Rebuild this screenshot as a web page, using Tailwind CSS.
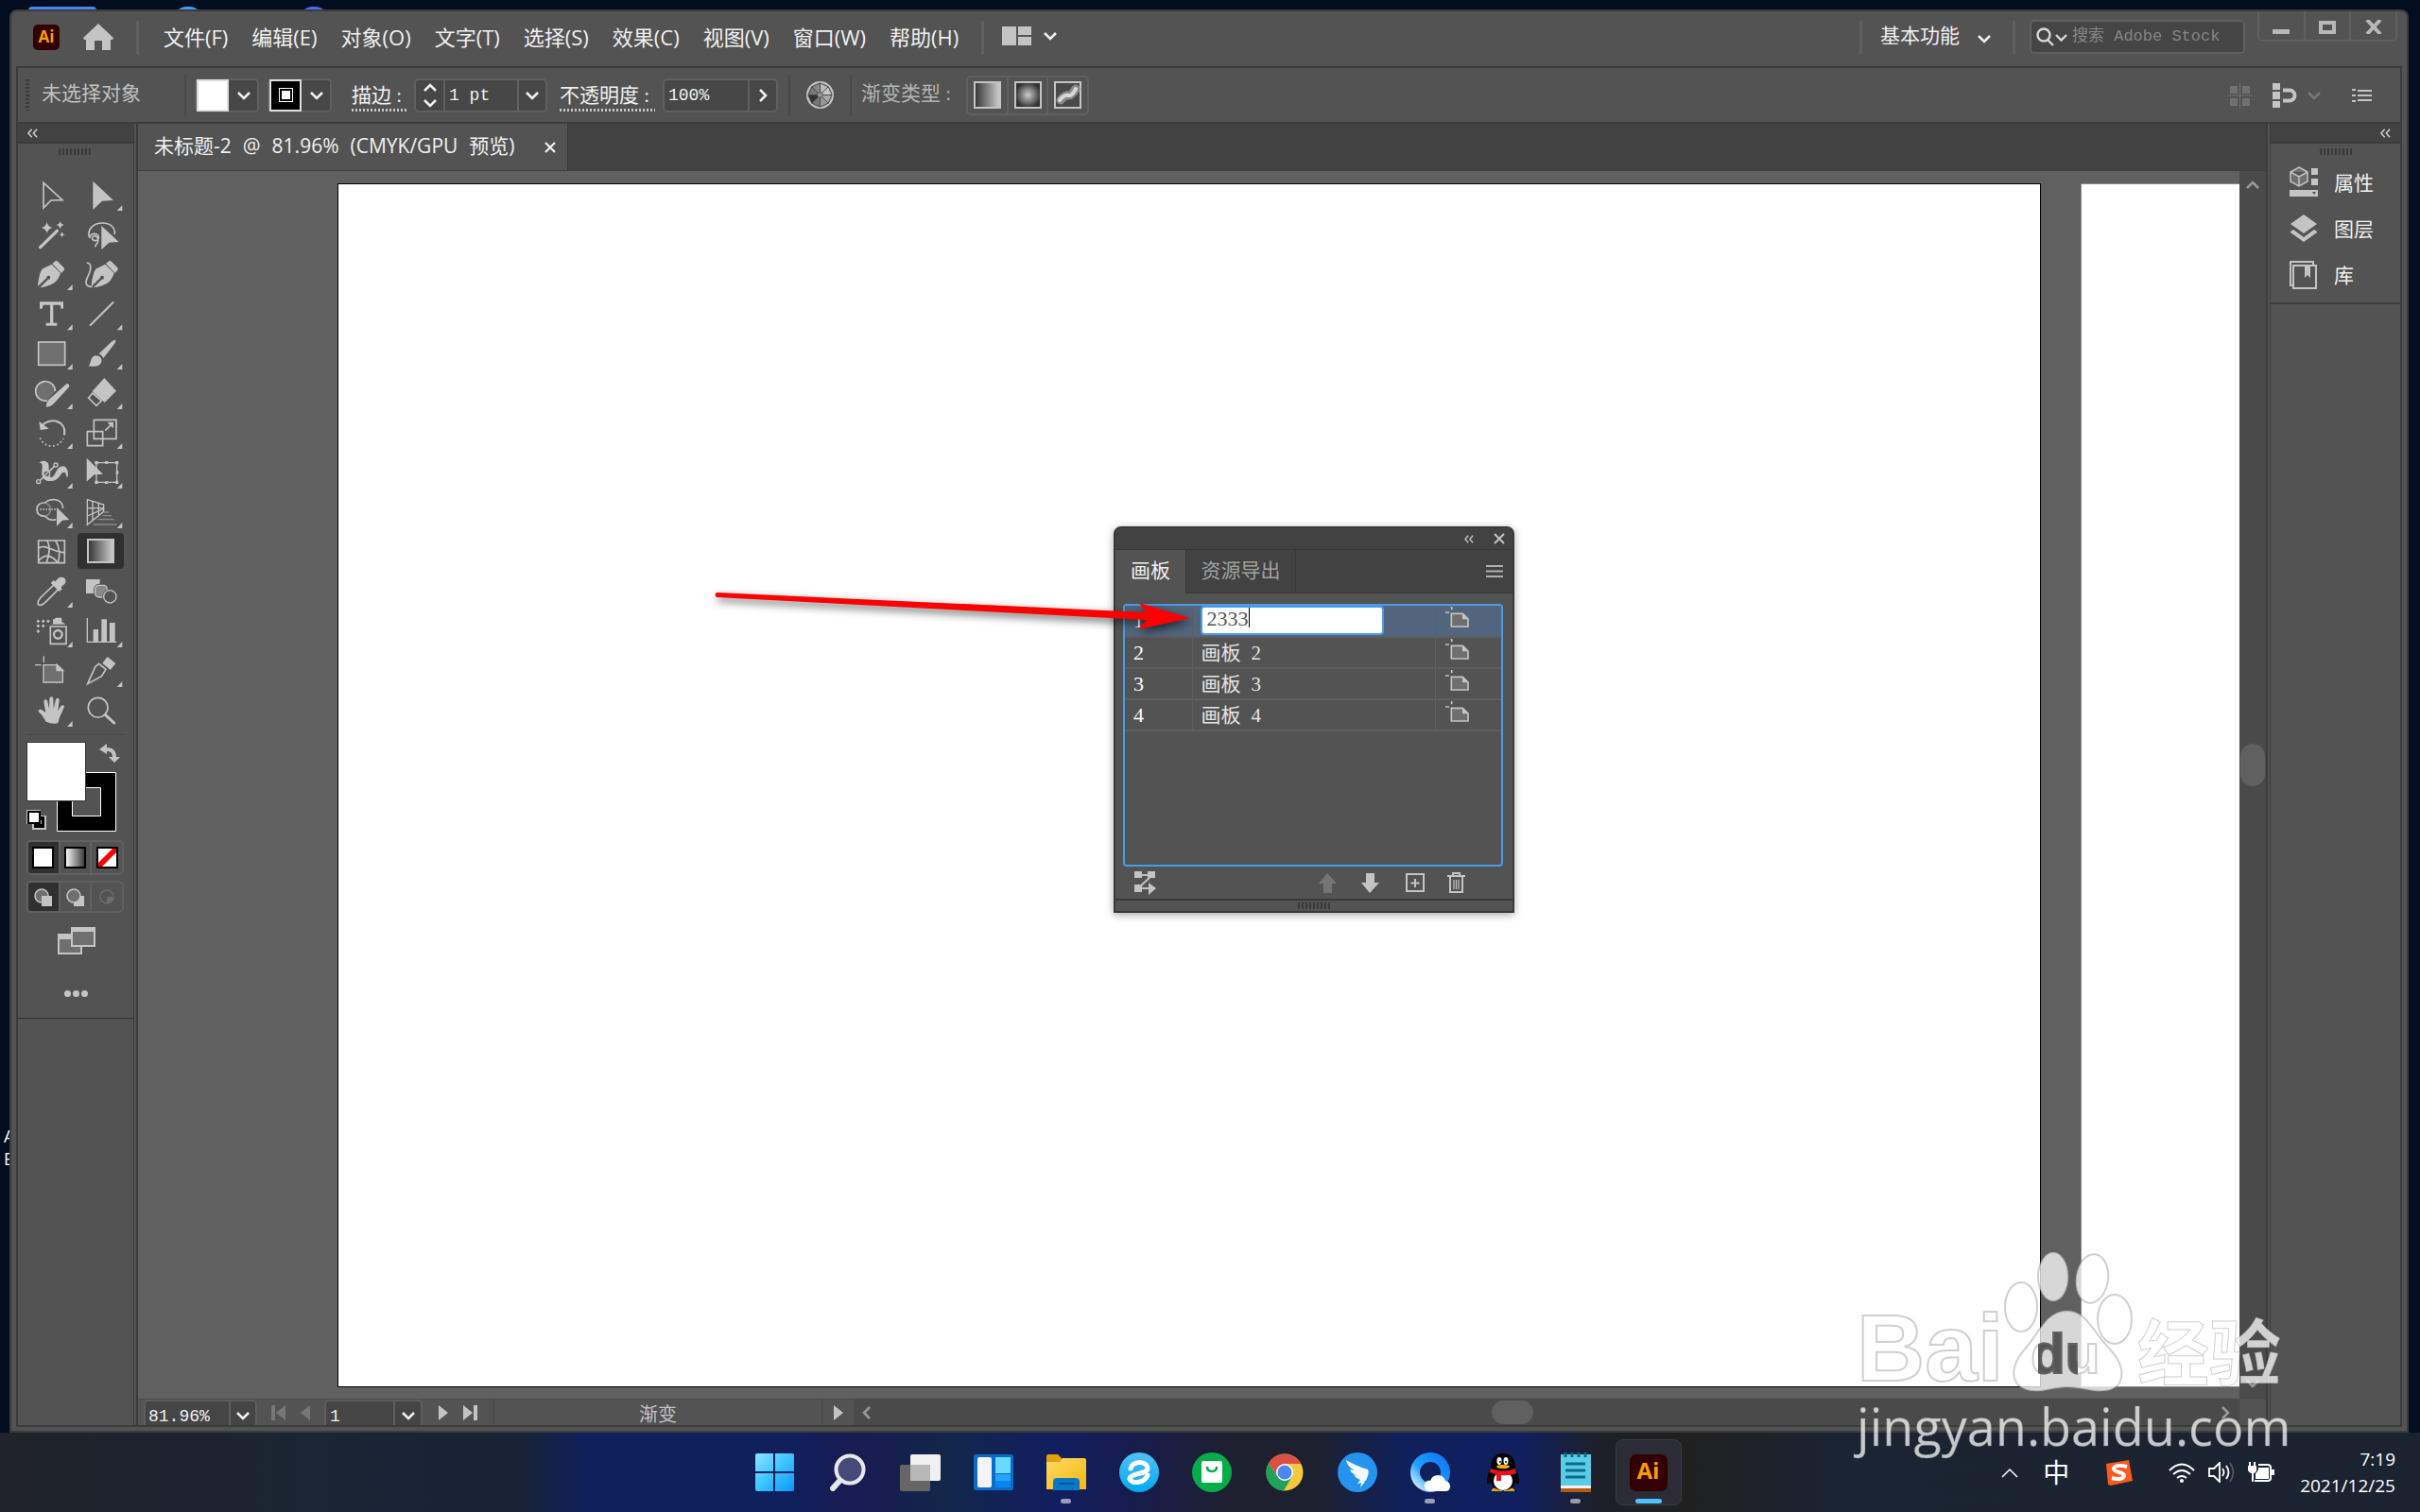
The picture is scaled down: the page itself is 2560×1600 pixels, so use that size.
<!DOCTYPE html>
<html lang="zh-CN">

<head>
    <meta charset="UTF-8">
    <meta name="viewport" content="width=device-width, initial-scale=1.0">
    <title>未标题-2</title>
    <script src="https://cdn.jsdelivr.net/npm/@tailwindcss/browser@4"></script>
</head>

<body class="relative flex h-screen flex-col overflow-hidden bg-[#020d1f] font-['Open_Sans','Noto_Sans_CJK_SC',sans-serif] text-[21px] leading-7 text-[#f0f0f0]">

    <!-- shared icons -->
    <svg class="absolute size-0">
        <symbol id="chev" viewBox="0 0 16 16"><path d="M2 5l6 6 6-6" fill="none" stroke="currentColor" stroke-width="2.6" /></symbol>
        <symbol id="dbl" viewBox="0 0 14 12"><path d="M6 1L1.500 6 6 11M12.500 1L8 6l4.500 5" fill="none" stroke="currentColor" stroke-width="1.800" /></symbol>
        <symbol id="board" viewBox="0 0 78 66"><path d="M0 18h12M20 0v10" fill="none" stroke="currentColor" stroke-width="5" /><path d="M19 22h36l17 17v24H19z" fill="#6f6f6f" stroke="currentColor" stroke-width="5" /><path d="M54 21v19h20z" fill="currentColor" /></symbol>
        <linearGradient id="gray"><stop offset="0" stop-color="#333" /><stop offset="1" stop-color="#d0d0d0" /></linearGradient>
        <linearGradient id="white"><stop offset="0" stop-color="#fff" /><stop offset="1" stop-color="#333" /></linearGradient>
        <radialGradient id="radial"><stop offset="0" stop-color="#ccc" /><stop offset="1" stop-color="#333" /></radialGradient>
        <linearGradient id="win" x2="1" y2="1"><stop offset="0" stop-color="#8ce4ff" /><stop offset=".5" stop-color="#3cc4ff" /><stop offset="1" stop-color="#0a96ff" /></linearGradient>
        <linearGradient id="folder" x2="1" y2="1"><stop offset="0" stop-color="#ffd867" /><stop offset="1" stop-color="#f7b80c" /></linearGradient>
        <linearGradient id="sky" x2="0" y2="1"><stop offset="0" stop-color="#50c0f5" /><stop offset="1" stop-color="#02aaf0" /></linearGradient>
        <linearGradient id="ring" x1="1" y1="0" x2="0" y2="1"><stop offset="0" stop-color="#0f78f8" /><stop offset=".6" stop-color="#20a0ff" /><stop offset="1" stop-color="#d0f0ff" /></linearGradient>
    </svg>

    <!-- desktop icons behind the window -->
    <div class="absolute left-[30px] top-[7px] h-4 w-[72px] rounded bg-[#4a86f2]"></div>
    <div class="absolute left-[182px] top-[7px] h-8 w-[34px] rounded-full bg-[#36a4f4]"></div>
    <div class="absolute left-[315px] top-[7px] h-8 w-[34px] rounded-full bg-[#4a6cf0]"></div>
    <div class="absolute left-1 top-[1190px] text-lg leading-6 text-white">A<br>E</div>

    <main class="relative flex min-h-0 flex-1 pl-[10px] pr-[12px] pt-[10px]">
        <div class="flex min-w-0 flex-1 flex-col rounded-t-lg border-2 border-[#3c3c3c] bg-[#535353]">

            <!-- menu bar -->
            <header class="flex h-[58px] shrink-0 items-start">
                <div class="flex h-[54px] flex-1 items-center">
                    <div class="ml-[23px] flex h-[27px] w-7 items-center justify-center rounded-[5px] bg-[#330000] text-[17px] font-bold text-[#ff9a00]">Ai</div>
                    <button aria-label="主页" class="ml-[25px]">
                        <svg class="h-7 w-8" viewBox="0 0 32 28" fill="#c4c4c4"><path d="M16 0l16 15-1 2h-2v11h-9V18h-8v10H3V17H1l-1-2z" /></svg>
                    </button>
                    <div class="ml-[24px] h-[35px] w-[3px] bg-[#606060]"></div>
                    <nav class="ml-[26px] flex gap-[25px] text-[22px]">
                        <button>文件(F)</button>
                        <button>编辑(E)</button>
                        <button>对象(O)</button>
                        <button>文字(T)</button>
                        <button>选择(S)</button>
                        <button>效果(C)</button>
                        <button>视图(V)</button>
                        <button>窗口(W)</button>
                        <button>帮助(H)</button>
                    </nav>
                    <div class="ml-[24px] h-[35px] w-[3px] bg-[#606060]"></div>
                    <button aria-label="排列文档" class="ml-[19px] flex items-center gap-3 pb-[2px]">
                        <svg class="h-5 w-[31px]" viewBox="0 0 31 20" fill="#c4c4c4"><path d="M0 0h15v20H0zM17 0h14v9H17zM17 11h14v9H17z" /></svg>
                        <svg class="size-4"><use href="#chev" /></svg>
                    </button>
                </div>
                <div class="flex h-[54px] items-center">
                    <div class="h-[35px] w-[3px] bg-[#606060]"></div>
                    <button class="ml-[19px] flex items-center gap-[18px] pb-1">基本功能 <svg class="mt-2 size-4"><use href="#chev" /></svg></button>
                    <div class="ml-[22px] h-[35px] w-[3px] bg-[#606060]"></div>
                    <label class="ml-[15px] flex h-9 w-[228px] items-center rounded-[5px] border-2 border-[#606060] bg-[#454545] pl-[5px]">
                        <svg class="h-5 w-[34px] shrink-0" viewBox="0 0 34 20" fill="none" stroke="#d8d8d8" stroke-width="2.400"><circle cx="8" cy="8" r="6.500" /><path d="M12 13l6 6M21 8l5.500 5.500L32 8" /></svg>
                        <input type="text" placeholder="搜索 Adobe Stock" class="ml-1 w-full min-w-0 font-['Liberation_Mono','Noto_Sans_CJK_SC',monospace] text-[17px] outline-none placeholder:text-[#858585]">
                    </label>
                </div>
                <div class="ml-[13px] mr-[10px] flex h-8 w-[148px] rounded-b-[5px] border-2 border-t-0 border-[#606060] text-[#b8b8b8]">
                    <button aria-label="最小化" class="flex flex-1 justify-center border-r-2 border-[#606060] pt-[19px]"><span class="h-[5px] w-[18px] bg-current"></span></button>
                    <button aria-label="最大化" class="flex flex-1 justify-center border-r-2 border-[#606060] pt-[10px]"><span class="h-[14px] w-[18px] border-4 border-current"></span></button>
                    <button aria-label="关闭" class="flex flex-1 justify-center pt-[9px]"><svg class="h-[15px] w-[18px]" viewBox="0 0 18 15" stroke="currentColor" stroke-width="4"><path d="M2 0l14 15M16 0L2 15" /></svg></button>
                </div>
            </header>

            <div class="mx-[5px] mb-1 flex min-h-0 flex-1 flex-col border-2 border-[#3c3c3c]">

                <!-- control bar -->
                <div class="flex h-[59px] shrink-0 items-center border-b-2 border-[#3c3c3c] font-['Liberation_Serif','Noto_Sans_CJK_SC',serif]">
                    <div class="ml-2 h-[33px] w-1 bg-[repeating-linear-gradient(#3a3a3a_0_2px,#535353_2px_4px)]"></div>
                    <div class="ml-[13px] w-[151px] pb-1 text-[#c0c0c0]">未选择对象</div>
                    <div class="h-11 w-[2px] bg-[#484848]"></div>

                    <button aria-label="填色" class="ml-[9px] flex h-9 w-[68px] items-center rounded-[5px] border-2 border-[#606060] bg-[#474747]">
                        <span class="h-[34px] w-[34px] border-2 border-[#ddd] bg-white"></span>
                        <svg class="ml-2 size-4"><use href="#chev" /></svg>
                    </button>
                    <button aria-label="描边颜色" class="ml-[9px] flex h-9 w-[68px] items-center rounded-[5px] border-2 border-[#606060] bg-[#474747]">
                        <span class="flex h-[34px] w-[34px] items-center justify-center border-2 border-[#ddd] bg-black"><span class="size-[13px] border-2 border-black bg-white outline-1 outline-white"></span></span>
                        <svg class="ml-2 size-4"><use href="#chev" /></svg>
                    </button>

                    <label for="weight" class="ml-[21px] flex w-[58px] flex-col pt-1">描边 :
                        <span class="h-[3px] bg-[repeating-linear-gradient(90deg,#c8c8c8_0_2px,#535353_2px_4px)]"></span>
                    </label>
                    <div class="ml-[8px] flex h-9 w-[141px] rounded-[5px] border-2 border-[#606060] bg-[#474747]">
                        <button aria-label="调整描边" class="flex w-[31px] flex-col items-center justify-between border-r-2 border-[#606060] py-[2px]">
                            <svg class="h-3 w-4 rotate-180" viewBox="0 2 16 12"><use href="#chev" width="16" height="16" /></svg>
                            <svg class="h-3 w-4" viewBox="0 2 16 12"><use href="#chev" width="16" height="16" /></svg>
                        </button>
                        <select id="weight" class="w-[76px] appearance-none whitespace-pre pl-[4px] font-['Liberation_Mono',monospace] text-[18px] outline-none">
                            <option>1 pt</option>
                        </select>
                        <span class="flex flex-1 items-center justify-center border-l-2 border-[#606060]"><svg class="size-4"><use href="#chev" /></svg></span>
                    </div>

                    <label for="opacity" class="ml-[13px] flex w-[101px] flex-col whitespace-nowrap pt-1">不透明度 :
                        <span class="h-[3px] bg-[repeating-linear-gradient(90deg,#c8c8c8_0_2px,#535353_2px_4px)]"></span>
                    </label>
                    <div class="ml-[8px] flex h-9 w-[122px] rounded-[5px] border-2 border-[#606060] bg-[#474747]">
                        <input id="opacity" type="text" value="100%" class="w-[88px] pl-[4px] font-['Liberation_Mono',monospace] text-[18px] outline-none">
                        <button aria-label="更多不透明度" class="flex flex-1 items-center justify-center border-l-2 border-[#606060]"><svg class="size-4 -rotate-90"><use href="#chev" /></svg></button>
                    </div>
                    <div class="ml-[11px] h-11 w-[2px] bg-[#484848]"></div>
                    <button aria-label="重新着色图稿" class="ml-[17px]">
                        <svg class="size-[29px]" viewBox="-15 -15 30 30" stroke="#4a4a4a" stroke-width="1">
                            <circle r="14" fill="#999" stroke="#c4c4c4" stroke-width="2" />
                            <path d="M0 0L0-13-9-9z" fill="#8a8a8a" /><path d="M0 0L0-13 9-9z" fill="#bbb" /><path d="M0 0L9-9 13 0z" fill="#c8c8c8" /><path d="M0 0L13 0 9 9z" fill="#a8a8a8" /><path d="M0 0L9 9 0 13z" fill="#999" /><path d="M0 0L0 13-9 9z" fill="#777" /><path d="M0 0L-9 9-13 0z" fill="#333" /><path d="M0 0L-13 0-9-9z" fill="#777" /><circle r="3" fill="#999" />
                        </svg>
                    </button>
                    <div class="ml-[17px] h-11 w-[2px] bg-[#484848]"></div>
                    <div class="ml-[10px] w-[111px] pb-1 text-[#b4b4b4]">渐变类型 :</div>
                    <div class="flex h-[42px] w-[130px] rounded-[5px] border-2 border-[#606060]">
                        <button aria-label="线性渐变" class="flex flex-1 items-center justify-center border-r-2 border-[#606060]"><svg class="size-[29px]"><rect x="1" y="1" width="27" height="27" fill="url(#gray)" stroke="#c4c4c4" stroke-width="2" /></svg></button>
                        <button aria-label="径向渐变" class="flex flex-1 items-center justify-center border-r-2 border-[#606060]"><svg class="size-[29px]"><rect x="1" y="1" width="27" height="27" fill="url(#radial)" stroke="#c4c4c4" stroke-width="2" /></svg></button>
                        <button aria-label="任意形状渐变" class="flex flex-1 items-center justify-center"><svg class="size-[29px]"><rect x="1" y="1" width="27" height="27" fill="#484848" stroke="#c4c4c4" stroke-width="2" /><path d="M7 20q5-6 8-5t8-7" fill="none" stroke="#888" stroke-width="9" stroke-linecap="round" /><path d="M6 20q5-6 9-5t8-7" fill="none" stroke="#d8d8d8" stroke-width="4" stroke-linecap="round" /></svg></button>
                    </div>

                    <div class="ml-auto mr-[30px] flex items-center">
                        <svg class="h-7 w-7" viewBox="0 0 28 28" fill="#707070"><path d="M3 4h8v8H3zM16 4h8v8h-8zM3 17h8v8H3zM16 17h8v8h-8zM13 1h1v26h-1zM0 13.500h27v1H0z" /></svg>
                        <svg class="ml-[20px] h-7 w-[27px]" viewBox="0 0 27 28" fill="#c4c4c4"><path d="M0 1h8v7H0zM0 10h8v8H0zM0 20h8v7H0z" /><path d="M11 8.500h7a5.500 5.500 0 010 11h-7" fill="none" stroke="#c4c4c4" stroke-width="4" /></svg>
                        <svg class="ml-[9px] size-4 text-[#777]"><use href="#chev" /></svg>
                        <svg class="ml-[32px] h-4 w-[21px]" viewBox="0 0 21 16" stroke="#c4c4c4" stroke-width="2.200"><path d="M0 2h4M6 3h15M0 8h4M6 8h15M0 14h4M6 13h15" /></svg>
                    </div>
                </div>

                <div class="flex min-h-0 flex-1">

                    <!-- tools panel -->
                    <aside class="w-[127px] shrink-0 border-r-2 border-[#3c3c3c]">
                        <div class="mr-[2px] h-full border-r border-[#3c3c3c]">
                            <div class="flex h-[21px] items-center border-b-2 border-[#3c3c3c] bg-[#424242] pl-[9px] text-[#d0d0d0]"><svg class="h-[10px] w-[13px]"><use href="#dbl" /></svg></div>
                            <div class="ml-[43px] mt-[5px] h-[7px] w-[35px] bg-[repeating-linear-gradient(90deg,#3a3a3a_0_2px,#535353_2px_4px)]"></div>
                            <div class="ml-[9px] mt-[22px] grid w-[104px] grid-cols-2 text-[#c4c4c4]">
                                <button aria-label="选择工具"><svg class="h-[42px] w-[52px]" viewBox="84 198 156 126" fill="none" stroke="currentColor" stroke-width="5"><path d="M138 220v80l24-24 36-1z" /></svg></button>
                                <button aria-label="直接选择工具"><svg class="h-[42px] w-[52px]" viewBox="240 198 156 126" fill="currentColor"><path d="M295 215v91l29-28 36-2zM388 292v17h-17z" /></svg></button>

                                <button aria-label="魔棒工具"><svg class="h-[42px] w-[52px]" viewBox="84 324 156 126" fill="currentColor"><path d="M128 425l53-52" stroke="currentColor" stroke-width="10" stroke-linecap="round" /><path d="M149 345q3 15 18 18-15 3-18 18-3-15-18-18 15-3 18-18zM191 341q2 11 13 13-11 2-13 13-2-11-13-13 11-2 13-13zM197 375q1 9 10 10-9 1-10 10-1-9-10-10 9-1 10-10z" /></svg></button>
                                <button aria-label="套索工具"><svg class="h-[42px] w-[52px]" viewBox="240 324 156 126" fill="none" stroke="currentColor" stroke-width="5"><path d="M283 392c-6-26 14-44 42-44 26 0 43 16 38 36M285 396c-2-18 28-18 28-2 0 14-24 12-20 0 4-10 20-4 18 12-1 8-8 8-9 18" /><path d="M322 357v76l24-23 31-2z" fill="currentColor" stroke="none" /></svg></button>

                                <button aria-label="钢笔工具"><svg class="h-[42px] w-[52px]" viewBox="84 450 156 126" fill="currentColor"><path d="M120 549c2-26 8-50 16-56l28-14 28 28c-6 18-14 28-22 32-14 8-28 12-43 14l26-26a6 6 0 10-5-5zM166 477l10-8q4-2 8 2l19 19q3 4 0 8l-8 9zM230 543v18h-17z" /></svg></button>
                                <button aria-label="曲率工具"><svg class="h-[42px] w-[52px]" viewBox="240 450 156 126" fill="currentColor"><path d="M290 549c2-26 8-50 16-56l28-14 28 28c-6 18-14 28-22 32-14 8-28 12-43 14l26-26a6 6 0 10-5-5zM336 477l10-8q4-2 8 2l19 19q3 4 0 8l-8 9z" /><path d="M275 475c10-2 14 8 12 20-2 16-14 28-14 42 0 8 6 14 20 13" fill="none" stroke="currentColor" stroke-width="5" /></svg></button>

                                <button aria-label="文字工具"><svg class="h-[42px] w-[52px]" viewBox="84 576 156 126" fill="currentColor"><path d="M126 598h75v22h-7l-3-12h-22v57h12v9h-35v-9h13v-57h-22l-3 12h-8zM230 670v18h-17z" /></svg></button>
                                <button aria-label="直线段工具"><svg class="h-[42px] w-[52px]" viewBox="240 576 156 126" fill="currentColor"><path d="M287 672l72-72" stroke="currentColor" stroke-width="6" stroke-linecap="round" /><path d="M388 670v18h-17z" /></svg></button>

                                <button aria-label="矩形工具"><svg class="h-[42px] w-[52px]" viewBox="84 702 156 126" fill="currentColor"><rect x="122" y="726" width="84" height="73" fill="#6f6f6f" stroke="currentColor" stroke-width="5" /><path d="M230 795v18h-17z" /></svg></button>
                                <button aria-label="画笔工具"><svg class="h-[42px] w-[52px]" viewBox="240 702 156 126" fill="currentColor"><path d="M314 763l41-39q8-7 11-4t-3 12l-35 45q-4-10-14-14zM280 802c10-4 5-32 24-33 14 0 20 10 18 19-3 14-22 18-42 14zM388 795v18h-17z" /></svg></button>

                                <button aria-label="Shaper 工具"><svg class="h-[42px] w-[52px]" viewBox="84 828 156 126" fill="currentColor"><path d="M150 912a31 31 0 1125-30" fill="#6f6f6f" stroke="currentColor" stroke-width="5" /><path d="M146 932q0-14 8-22l54-49q6-5 10-1t0 10l-49 53q-8 8-23 9zM230 921v18h-17z" /></svg></button>
                                <button aria-label="橡皮擦工具"><svg class="h-[42px] w-[52px]" viewBox="240 828 156 126" fill="currentColor"><path d="M331 840l38 41-37 37-39-36z" /><path d="M294 888l-13 15 25 25 16-16z" fill="none" stroke="currentColor" stroke-width="5" /><path d="M388 921v18h-17z" /></svg></button>

                                <button aria-label="旋转工具"><svg class="h-[42px] w-[52px]" viewBox="84 -6 156 126" fill="currentColor"><path d="M134 30c26-26 78-16 70 31" fill="none" stroke="currentColor" stroke-width="6" /><path d="M124 18l4 27 27-4z" /><path d="M127 70a40 40 0 0074 2" fill="none" stroke="currentColor" stroke-width="5" stroke-dasharray="5 8" /><path d="M230 87v18h-17z" /></svg></button>
                                <button aria-label="比例缩放工具"><svg class="h-[42px] w-[52px]" viewBox="240 -6 156 126" fill="none" stroke="currentColor" stroke-width="5"><path d="M298 13h71v60h-71zM277 50h49v45h-49zM334 47l20-20" /><path d="M360 20v20l-20-20zM388 87v18h-17z" fill="currentColor" stroke="none" /></svg></button>

                                <button aria-label="宽度工具"><svg class="h-[42px] w-[52px]" viewBox="84 120 156 126" fill="currentColor"><path d="M124 150c8-10 26-10 30 4 4 20-6 34 8 42 16-2 14-34 36-36 16 0 20 20 17 35-6 0-4-16-12-16-12 0-12 26-40 28-20 2-30-8-30-24s4-26-2-32c-4-4-4 0-7-1z" /><path d="M128 204l44-43" stroke="currentColor" stroke-width="5" /><g fill="#535353" stroke="currentColor" stroke-width="4"><circle cx="122" cy="209" r="6" /><circle cx="177" cy="156" r="6" /><circle cx="148" cy="184" r="10" /></g><path d="M142 190l12-12" stroke="currentColor" stroke-width="4" /><path d="M230 213v18h-17z" /></svg></button>
                                <button aria-label="自由变换工具"><svg class="h-[42px] w-[52px]" viewBox="240 120 156 126" fill="currentColor"><path d="M306 149h65v62h-65z" fill="none" stroke="currentColor" stroke-width="4" /><path d="M275 134v75l24-22 28-2zM301 144h10v10h-10zM333 144h10v8h-10zM366 144h10v10h-10zM368 175h8v10h-8zM366 206h10v10h-10zM333 208h10v8h-10zM301 206h10v10h-10zM388 213v18h-17z" /></svg></button>

                                <button aria-label="形状生成器工具"><svg class="h-[42px] w-[52px]" viewBox="84 246 156 126" fill="none" stroke="currentColor" stroke-width="5"><path d="M178 329c-14 4-26 1-34-10-20 0-27-10-27-22 0-14 10-22 27-21 10-14 54-18 56 18" /><path d="M145 278c18 4 22 32 0 40" stroke="#888" /><path d="M127 297h50" stroke-dasharray="5 4" stroke-width="4" /><path d="M180 291v59l18-18 22-2zM230 339v18h-17z" fill="currentColor" stroke="none" /></svg></button>
                                <button aria-label="透视网格工具"><svg class="h-[42px] w-[52px]" viewBox="240 246 156 126" fill="none" stroke="currentColor" stroke-width="4"><path d="M277 266v80l52-42v-22zM294 272v60M313 277v40M277 293h52M277 318l52-23" /><path d="M330 306h16M326 317h28M310 329h52M296 345h74" stroke="#8a8a8a" /><path d="M388 339v18h-17z" fill="currentColor" stroke="none" /></svg></button>

                                <button aria-label="网格工具"><svg class="h-[42px] w-[52px]" viewBox="84 372 156 126" fill="none" stroke="currentColor" stroke-width="5"><path d="M122 396h83v71h-83zM150 396c12 24 6 48-3 71M176 396c14 22 14 50 8 71M122 421c22-18 46 14 83 13M122 461c18-22 40-22 60 4" /></svg></button>
                                <button aria-label="渐变工具" class="ml-[2px] flex h-[38px] w-[49px] items-center justify-center rounded-[4px] bg-[#303030]"><svg class="h-[26px] w-[29px]"><rect x="1" y="1" width="27" height="24" fill="url(#gray)" stroke="#c4c4c4" stroke-width="2" /></svg></button>

                                <button aria-label="吸管工具"><svg class="h-[42px] w-[52px]" viewBox="84 498 156 126" fill="currentColor"><path d="M121 599c-4-12 6-18 12-26l38-36 14 14-38 38c-8 8-18 16-26 10z" fill="none" stroke="currentColor" stroke-width="5" /><path d="M161 531l8-8 6 3 12-12q12-4 18 2t2 16l-13 12 3 6-8 8zM230 591v18h-17z" /></svg></button>
                                <button aria-label="混合工具"><svg class="h-[42px] w-[52px]" viewBox="240 498 156 126" fill="none" stroke="currentColor" stroke-width="4"><path d="M275 521h40v41h-40z" fill="currentColor" /><rect x="302" y="538" width="38" height="38" rx="12" fill="#888" stroke="#535353" stroke-width="9" /><rect x="302" y="538" width="38" height="38" rx="12" fill="#888" /><circle cx="349" cy="574" r="24" fill="#535353" stroke="none" /><circle cx="349" cy="574" r="20" /></svg></button>

                                <button aria-label="符号喷枪工具"><svg class="h-[42px] w-[52px]" viewBox="84 624 156 126" fill="currentColor"><path d="M160 669h50v55h-50z" fill="none" stroke="currentColor" stroke-width="5" /><path d="M164 662l10-8v-10q0-3 4-3h14q4 0 4 3v10l12 8zM168 646h6v12h-6zM230 717v18h-17z" /><circle cx="184" cy="694" r="13" fill="none" stroke="currentColor" stroke-width="7" /><path d="M116 652h10M132 652h10M148 652h10M116 667h10M132 667h10M116 684h10M121 647v10M137 647v10M153 647v10M121 662v10M137 662v10M121 679v10" stroke="currentColor" stroke-width="4" /></svg></button>
                                <button aria-label="柱形图工具"><svg class="h-[42px] w-[52px]" viewBox="240 624 156 126" fill="currentColor"><path d="M277 642v76h93" fill="none" stroke="currentColor" stroke-width="4" /><path d="M296 678h16v40h-16zM322 646h17v72h-17zM348 657h17v61h-17zM388 717v18h-17z" /></svg></button>

                                <button aria-label="画板工具"><svg class="h-[42px] w-[52px]" viewBox="84 750 156 126" fill="none" stroke="currentColor" stroke-width="4"><path d="M139 763v20M111 791h20" /><path d="M138 791h43l18 17v38h-61z" fill="#6f6f6f" /><path d="M180 790v19h20z" fill="currentColor" /></svg></button>
                                <button aria-label="切片工具"><svg class="h-[42px] w-[52px]" viewBox="240 750 156 126" fill="currentColor"><path d="M278 851l24-54 12-10 22 18-14 22z" fill="none" stroke="currentColor" stroke-width="5" /><path d="M341 765l26 21-17 21-25-22zM388 843v18h-17z" /></svg></button>

                                <button aria-label="抓手工具"><svg class="h-[42px] w-[52px]" viewBox="84 876 156 126" fill="currentColor"><path d="M146 971c-8-14-14-24-24-32-2-6 6-8 10-6l13 9-6-34q0-8 7-7l4 3 6 26 1-32q1-6 6-6t6 6l1 32 7-29q3-6 8-4t3 8l-4 32 9-15q4-5 8-3t2 7l-15 34-4 16q-18 4-38-5zM230 969v18h-17z" /></svg></button>
                                <button aria-label="缩放工具"><svg class="h-[42px] w-[52px]" viewBox="240 876 156 126" fill="none" stroke="currentColor" stroke-width="5"><circle cx="311" cy="926" r="31" /><path d="M334 949l28 26" stroke-width="9" stroke-linecap="round" /></svg></button>
                            </div>

                            <div class="mx-2 mt-[3px] h-px bg-[#484848]"></div>
                            <svg class="ml-[9px] mt-[7px] h-[96px] w-[104px]" viewBox="0 0 104 96">
                                <path d="M32.500 32.500h62v62h-62zM48.500 48.500v30h30v-30z" fill="#000" fill-rule="evenodd" stroke="#fff" stroke-width="1" />
                                <path d="M.500.500h62v62H.500z" fill="#fff" stroke="#333" />
                                <path d="M82 8c10-1 11 4 11 9" fill="none" stroke="#c4c4c4" stroke-width="4" /><path d="M85 2v11l-8-5zM87 16h12l-6 6z" fill="#c4c4c4" />
                                <path d="M0 72h15v6h6v15H6v-6H0z" fill="#c4c4c4" /><path d="M8 79h11v12H8z" fill="#000" /><path d="M12 83h4v4h-4z" fill="#c4c4c4" /><path d="M2 74h12v12H2z" fill="#fff" stroke="#000" stroke-width="2" />
                            </svg>
                            <div class="ml-[9px] mt-[8px] flex h-[37px] w-[103px] overflow-hidden rounded-[5px] border-2 border-[#606060]">
                                <button aria-label="颜色" class="flex flex-1 items-center justify-center border-r-2 border-[#606060] bg-[#303030]"><svg class="size-[23px]"><rect x="1" y="1" width="21" height="21" fill="#fff" stroke="#000" stroke-width="2" /></svg></button>
                                <button aria-label="渐变" class="flex flex-1 items-center justify-center border-r-2 border-[#606060]"><svg class="size-[23px]"><rect x="1" y="1" width="21" height="21" fill="url(#white)" stroke="#000" stroke-width="2" /></svg></button>
                                <button aria-label="无" class="flex flex-1 items-center justify-center"><svg class="size-[23px]"><rect x="1" y="1" width="21" height="21" fill="#fff" stroke="#000" stroke-width="2" /><path d="M2 17v4h4L21 6V2h-4z" fill="red" /></svg></button>
                            </div>
                            <div class="ml-[9px] mt-[6px] flex h-[34px] w-[103px] overflow-hidden rounded-[5px] border-2 border-[#606060]">
                                <button aria-label="正常绘图" class="flex flex-1 items-center justify-center border-r-2 border-[#606060] bg-[#303030]"><svg class="size-[19px]"><circle cx="8" cy="8" r="7" fill="#6f6f6f" stroke="#c4c4c4" stroke-width="1.500" /><path d="M8 8h11v11H8z" fill="#c4c4c4" /></svg></button>
                                <button aria-label="背面绘图" class="flex flex-1 items-center justify-center border-r-2 border-[#606060]"><svg class="size-[19px]"><path d="M8 8h11v11H8z" fill="#c4c4c4" /><circle cx="8" cy="8" r="7" fill="#6f6f6f" stroke="#c4c4c4" stroke-width="1.500" /></svg></button>
                                <button aria-label="内部绘图" class="flex flex-1 items-center justify-center"><svg class="size-[17px]"><circle cx="8" cy="8" r="7" fill="none" stroke="#6c6c6c" stroke-width="1.500" /><path d="M8 8h7q-1 6-7 7z" fill="#6c6c6c" /></svg></button>
                            </div>
                            <button aria-label="更改屏幕模式" class="ml-[42px] mt-[14px] block"><svg class="h-[31px] w-[40px]" fill="#6f6f6f" stroke="#c4c4c4" stroke-width="2"><path d="M1 9h24v20H1z" /><path d="M1 10h20v3H1z" fill="#c4c4c4" /><path d="M15 2h24v19H15z" /><path d="M15 3h24v2H15z" fill="#c4c4c4" /></svg></button>
                            <button aria-label="编辑工具栏" class="ml-[49px] mt-[37px] flex gap-[2px]"><span class="size-[7px] rounded-full bg-[#c4c4c4]"></span><span class="size-[7px] rounded-full bg-[#c4c4c4]"></span><span class="size-[7px] rounded-full bg-[#c4c4c4]"></span></button>
                            <div class="mt-[22px] h-px bg-[#303030]"></div>
                        </div>
                    </aside>

                    <!-- document -->
                    <section class="flex min-w-0 flex-1 flex-col">
                        <div class="flex h-[50px] shrink-0 border-b border-[#3c3c3c] bg-[#424242]">
                            <div class="flex w-[455px] items-center border-r border-[#383838] bg-[#535353] pl-[17px] pr-[12px]">
                                <div class="flex flex-1 gap-[12px] whitespace-nowrap pb-1"><span>未标题-2</span><span>@</span><span>81.96%</span><span>(CMYK/GPU</span><span>预览)</span></div>
                                <button aria-label="关闭文档"><svg class="size-3" viewBox="0 0 12 12" stroke="#f0f0f0" stroke-width="2.200"><path d="M1 1l10 10M11 1L1 11" /></svg></button>
                            </div>
                        </div>
                        <div class="flex min-h-0 flex-1">
                            <div class="relative flex-1 overflow-hidden bg-[#606060]">
                                <div class="absolute bottom-[12px] left-[211px] right-[210px] top-[13px] border border-black bg-white"></div>
                                <div class="absolute bottom-[12px] right-0 top-[13px] w-[168px] border border-r-0 border-[#888] bg-white"></div>
                            </div>
                            <div class="flex w-7 flex-col items-center bg-[#4a4a4a] text-[#999]">
                                <svg class="mt-[7px] size-4 rotate-180"><use href="#chev" /></svg>
                                <div class="mt-[583px] h-[45px] w-[26px] rounded-full bg-[#606060]"></div>
                                <svg class="mb-2 mt-auto size-4"><use href="#chev" /></svg>
                            </div>
                        </div>

                        <!-- status bar -->
                        <div class="flex h-7 shrink-0 border-t border-[#4a4a4a] font-['Liberation_Mono','Noto_Sans_CJK_SC',monospace] text-[18px]">
                            <div class="ml-[6px] flex w-[120px] rounded-t-[5px] border-2 border-b-0 border-[#5e5e5e] bg-[#454545]">
                                <select aria-label="缩放级别" class="w-[88px] appearance-none pl-[3px] pt-[2px] outline-none"><option>81.96%</option></select>
                                <span class="flex flex-1 items-center justify-center border-l-2 border-[#5e5e5e]"><svg class="mt-1 size-4"><use href="#chev" /></svg></span>
                            </div>
                            <div class="flex w-[71px] items-center justify-center gap-[16px] text-[#777]">
                                <svg class="h-4 w-[15px]" fill="currentColor"><path d="M0 0h4v16H0zM15 0v16L5 8z" /></svg>
                                <svg class="h-4 w-[10px]" fill="currentColor"><path d="M10 0v16L0 8z" /></svg>
                            </div>
                            <div class="flex w-[104px] rounded-t-[5px] border-2 border-b-0 border-[#5e5e5e] bg-[#454545]">
                                <select aria-label="画板导航" class="w-[71px] appearance-none pl-1 pt-[2px] outline-none"><option>1</option></select>
                                <span class="flex flex-1 items-center justify-center border-l-2 border-[#5e5e5e]"><svg class="mt-1 size-4"><use href="#chev" /></svg></span>
                            </div>
                            <div class="flex w-[74px] items-center justify-center gap-[16px] text-[#c4c4c4]">
                                <svg class="h-4 w-[10px]" fill="currentColor"><path d="M0 0v16l10-8z" /></svg>
                                <svg class="h-4 w-[15px]" fill="currentColor"><path d="M11 0h4v16h-4zM0 0v16l10-8z" /></svg>
                            </div>
                            <div class="flex w-[350px] items-center justify-center border-x-2 border-[#4b4b4b] pt-2 text-[20px] text-[#c4c4c4]">渐变</div>
                            <div class="flex w-[32px] items-center justify-center text-[#c4c4c4]"><svg class="h-4 w-[10px]" fill="currentColor"><path d="M0 0v16l10-8z" /></svg></div>
                            <div class="flex flex-1 items-center bg-[#4a4a4a] text-[#999]">
                                <svg class="ml-[6px] size-4 rotate-90"><use href="#chev" /></svg>
                                <div class="ml-[653px] h-[25px] w-11 rounded-full bg-[#606060]"></div>
                                <svg class="ml-auto mr-[7px] size-4 -rotate-90"><use href="#chev" /></svg>
                            </div>
                            <div class="w-7"></div>
                        </div>
                    </section>

                    <!-- collapsed panels -->
                    <aside class="w-[142px] shrink-0 border-l-2 border-[#3c3c3c]">
                        <div class="ml-[2px] h-full border-l border-[#3c3c3c]">
                            <div class="flex h-[21px] items-center justify-end border-b-2 border-[#3c3c3c] bg-[#424242] pr-[9px] text-[#d0d0d0]"><svg class="h-[10px] w-[13px]"><use href="#dbl" /></svg></div>
                            <div class="mx-auto mt-[5px] h-[7px] w-[34px] bg-[repeating-linear-gradient(90deg,#3a3a3a_0_2px,#535353_2px_4px)]"></div>
                            <div class="mt-[4px] flex flex-col pl-[20px]">
                                <button class="flex h-[49px] items-center gap-[16px]">
                                    <svg class="h-[33px] w-[31px]" fill="#c4c4c4"><path d="M10 1l9 5v10l-9 5-9-5V6zM1 6l9 5 9-5M10 11v10" fill="#6f6f6f" stroke="#c4c4c4" stroke-width="1.500" /><path d="M23 2h7v7h-7zM23 13h7v7h-7z" /><path d="M0 25h30v7H0z" /><path d="M24 27h4l-2 3z" fill="#535353" /></svg>属性
                                </button>
                                <button class="flex h-[49px] items-center gap-[16px]">
                                    <svg class="h-[30px] w-[31px]" fill="#c4c4c4"><path d="M15 0l14 10-14 10L1 10zM1 18l3-2 11 8 11-8 3 2v1L15 29 1 19z" /></svg>图层
                                </button>
                                <button class="flex h-[49px] items-center gap-[16px]">
                                    <svg class="h-[30px] w-[31px]" fill="none" stroke="#c4c4c4" stroke-width="2"><path d="M4 26H1V1h24v3M4 5h24v24H4z" /><path d="M16 5h6v13l-3-3-3 3z" fill="#c4c4c4" stroke="none" /></svg>库
                                </button>
                            </div>
                            <div class="mt-[5px] h-[2px] bg-[#3c3c3c]"></div>
                        </div>
                    </aside>
                </div>
            </div>
        </div>
    </main>

    <!-- artboards panel -->
    <div class="absolute left-[1178px] top-[557px] flex h-[409px] w-[424px] flex-col rounded-t-lg border-2 border-[#3a3a3a] bg-[#535353] shadow-[0_2px_8px_rgba(0,0,0,0.35)]">
        <div class="flex h-[23px] shrink-0 items-center justify-end gap-[20px] border-b border-[#383838] bg-[#424242] pr-[8px] text-[#c4c4c4]">
            <button aria-label="折叠"><svg class="h-[9px] w-[12px]"><use href="#dbl" /></svg></button>
            <button aria-label="关闭面板"><svg class="size-3" viewBox="0 0 12 12" stroke="currentColor" stroke-width="2"><path d="M1 1l10 10M11 1L1 11" /></svg></button>
        </div>
        <div class="flex h-[46px] shrink-0 bg-[#424242]">
            <button class="w-[74px] bg-[#535353] pb-1">画板</button>
            <button class="w-[117px] border-x border-b border-[#383838] pb-1 text-[#a0a0a0]">资源导出</button>
            <div class="flex flex-1 items-center justify-end border-b border-[#383838] pr-[10px]"><svg class="h-[13px] w-[18px]" stroke="#b0b0b0" stroke-width="2"><path d="M0 1h18M0 6.500h18M0 12h18" /></svg></div>
        </div>
        <div class="ml-[8px] mr-[10px] mt-[11px] h-[278px] shrink-0 rounded-[4px] border-2 border-[#4a9be8] font-['Liberation_Serif','Noto_Sans_CJK_SC',serif]">
            <table class="w-full table-fixed text-left text-[#e4e4e4]">
                <tbody>
                    <tr class="h-[33px] border-b-2 border-[#5e5e5e] bg-[#52657c]">
                        <td class="w-[71px] border-r border-[#5e5e5e] pl-[9px] text-[22px] text-white">1</td>
                        <td class="w-[257px] border-r border-[#5e5e5e] p-0 pl-[8px] align-top"><input type="text" aria-label="画板名称" value="2333" class="block h-[31px] w-[194px] rounded-[4px] border-2 border-[#4a9be8] bg-white pb-1 pl-[5px] text-[22px] text-[#555] outline-none"></td>
                        <td class="p-0 pl-[10px] pt-px align-top"><svg class="h-[22px] w-[26px] text-[#c4c4c4]"><use href="#board" /></svg></td>
                    </tr>
                    <tr class="h-[33px] border-b-2 border-[#5e5e5e]">
                        <td class="border-r border-[#5e5e5e] pl-[9px] text-[22px] text-white">2</td>
                        <td class="border-r border-[#5e5e5e] pl-[9px]"><span class="flex gap-[11px]"><span>画板</span><span>2</span></span></td>
                        <td class="p-0 pl-[10px] pt-px align-top"><svg class="h-[22px] w-[26px] text-[#c4c4c4]"><use href="#board" /></svg></td>
                    </tr>
                    <tr class="h-[33px] border-b-2 border-[#5e5e5e]">
                        <td class="border-r border-[#5e5e5e] pl-[9px] text-[22px] text-white">3</td>
                        <td class="border-r border-[#5e5e5e] pl-[9px]"><span class="flex gap-[11px]"><span>画板</span><span>3</span></span></td>
                        <td class="p-0 pl-[10px] pt-px align-top"><svg class="h-[22px] w-[26px] text-[#c4c4c4]"><use href="#board" /></svg></td>
                    </tr>
                    <tr class="h-[33px] border-b-2 border-[#5e5e5e]">
                        <td class="border-r border-[#5e5e5e] pl-[9px] text-[22px] text-white">4</td>
                        <td class="border-r border-[#5e5e5e] pl-[9px]"><span class="flex gap-[11px]"><span>画板</span><span>4</span></span></td>
                        <td class="p-0 pl-[10px] pt-px align-top"><svg class="h-[22px] w-[26px] text-[#c4c4c4]"><use href="#board" /></svg></td>
                    </tr>
                </tbody>
            </table>
        </div>
        <div class="flex flex-1 items-center border-b-2 border-[#3a3a3a] pl-[20px] pr-[50px] text-[#c4c4c4]">
            <button aria-label="重新排列" class="mr-auto"><svg class="h-[25px] w-[23px]" fill="currentColor"><path d="M3 4h16L4 18h12" fill="none" stroke="currentColor" stroke-width="2" /><path d="M0 0h8v7H0zM14 0h8v7h-8zM0 14h8v8H0zM15 12l8 6-8 7z" /></svg></button>
            <button aria-label="上移"><svg class="h-[21px] w-[19px]" fill="#757575"><path d="M9 0l10 11h-5v10H5V11H0z" /></svg></button>
            <button aria-label="下移" class="ml-[26px]"><svg class="h-[21px] w-[19px]" fill="currentColor"><path d="M9 21l10-11h-5V0H5v10H0z" /></svg></button>
            <button aria-label="新建画板" class="ml-[28px]"><svg class="size-5" fill="none" stroke="currentColor" stroke-width="2"><path d="M1 1h18v18H1zM10 6v9M5.500 10.500h9" /></svg></button>
            <button aria-label="删除画板" class="ml-[24px]"><svg class="h-[22px] w-[19px]" fill="none" stroke="currentColor" stroke-width="2"><path d="M0 4h19M3 4v17h13V4M6 4V1h7v3" /><path d="M7 8v10M9.500 8v10M12 8v10" stroke-width="1.200" /></svg></button>
        </div>
        <div class="flex h-[11px] shrink-0 items-center justify-center"><div class="h-[7px] w-[34px] bg-[repeating-linear-gradient(90deg,#3a3a3a_0_2px,#535353_2px_4px)]"></div></div>
    </div>
    <div class="absolute left-[1321px] top-[643px] h-[21px] w-px bg-black"></div>

    <!-- red arrow -->
    <svg class="absolute left-[740px] top-[610px] h-[80px] w-[540px] drop-shadow-[2px_4px_5px_rgba(0,0,0,0.6)]" fill="#fe0000"><path d="M18 17L472 38l-7-10 54 16-55 12 9-10L18 22q-3-3 0-5z" /></svg>

    <!-- taskbar -->
    <footer class="grid h-[84px] shrink-0 grid-cols-[1fr_auto_1fr] items-center bg-[linear-gradient(90deg,#20232a_0,#1b2533_330px,#172437_550px,#10205c_620px,#10205c_840px,#191b52_900px,#12264a_1000px,#121f60_1115px,#171c4c_1200px,#1e2030_1300px,#1d202e_1390px,#10205a_1480px,#101f60_1610px,#1d2029_1690px,#202020_1790px,#1b2432_1930px,#1c2330_100%)]">
        <div></div>
        <div class="flex h-full pl-[3px]">
            <button aria-label="开始" class="flex w-[77px] items-center justify-center"><svg class="size-[41px]" fill="url(#win)"><path d="M2 0h17v19H0V2q0-2 2-2zM21 0h18q2 0 2 2v17H21zM0 21h19v19H2q-2 0-2-2zM21 21h20v17q0 2-2 2H21z" /></svg></button>
            <button aria-label="搜索" class="flex w-[77px] items-center justify-center"><svg class="size-[40px]" fill="none" stroke="#e8e8ec" stroke-linecap="round"><path d="M4 37l9-10" stroke-width="6" /><circle cx="22" cy="17" r="14.500" fill="#454a78" stroke-width="4" /></svg></button>
            <button aria-label="任务视图" class="flex w-[77px] items-center justify-center"><svg class="h-[40px] w-[43px]"><rect x="0" y="12" width="32" height="28" rx="2" fill="#666" /><rect x="11" y="1" width="32" height="28" rx="2" fill="#f0f0f0" /><path d="M11 12h21v17H13q-2 0-2-2z" fill="#b8b8b8" /></svg></button>
            <button aria-label="小组件" class="flex w-[77px] items-center justify-center"><svg class="h-[38px] w-[42px]"><rect width="42" height="38" rx="2" fill="#0a6cc8" /><rect x="4" y="3" width="15" height="32" rx="2" fill="#f4f4f6" /><path d="M23 3h16v17H23z" fill="#6ad8ff" /><path d="M23 21h16v7H23z" fill="#22a4ff" /><path d="M23 28h16v7H23z" fill="#0786f0" /></svg></button>
            <button aria-label="文件资源管理器" class="relative flex w-[77px] items-center justify-center"><svg class="h-[38px] w-[42px]"><path d="M0 2q0-2 2-2h10l5 5v5H0z" fill="#e0a008" /><path d="M0 8h14l3-4h23q2 0 2 2v31H0z" fill="url(#folder)" /><path d="M7 38V29q0-4 4-4h20q4 0 4 4v9z" fill="#0a78c8" /><path d="M13 31h16" stroke="#0858a0" stroke-width="2" /></svg><span class="absolute bottom-[9px] h-[5px] w-[11px] rounded-full bg-[#9a9db8]"></span></button>
            <button aria-label="浏览器" class="flex w-[77px] items-center justify-center"><svg class="size-[42px]"><circle cx="21" cy="21" r="21" fill="url(#sky)" /><path d="M12 17c2-8 16-9 18-1 1 8-18 5-19 12 3 6 16 4 19-4" fill="none" stroke="#fff" stroke-width="5" stroke-linecap="round" /></svg></button>
            <button aria-label="应用商店" class="flex w-[77px] items-center justify-center"><svg class="size-[42px]"><circle cx="21" cy="21" r="21" fill="#02ad4a" /><rect x="10" y="9" width="22" height="23" rx="2" fill="#fff" /><path d="M16 15q0 5 5 5t5-5" fill="none" stroke="#02ad4a" stroke-width="2.500" /></svg></button>
            <button aria-label="Chrome" class="flex w-[77px] items-center justify-center"><svg class="size-[40px]" viewBox="-20 -20 40 40"><circle r="19.500" fill="#f7c83c" /><path d="M-17-9.800A19.500 19.500 0 0117-9H0L-8 4z" fill="#da5044" /><path d="M-17-9.800A19.500 19.500 0 00-1 19.500L8 4-8 4z" fill="#1fa35c" /><circle r="9" fill="#fff" /><circle r="7.500" fill="#4b87f0" /></svg></button>
            <button aria-label="钉钉" class="flex w-[77px] items-center justify-center"><svg class="size-[42px]"><circle cx="21" cy="21" r="21" fill="#2494ee" /><path d="M9 8q12 7 23 10 2 3-2 12h-2l1 1-5 6 1-5-4 1 3-4q-5-2-7-5l4 1q-7-3-8-7l5 1q-8-4-9-11z" fill="#f4f9ff" /></svg></button>
            <button aria-label="QQ浏览器" class="relative flex w-[77px] items-center justify-center"><svg class="size-[42px]"><circle cx="21" cy="21" r="16" fill="none" stroke="url(#ring)" stroke-width="10" /><path d="M19 41a6 6 0 01-1-11q2-1 3 0 2-6 8-6t8 6q5 1 5 6 0 5-5 5z" fill="#fff" /></svg><span class="absolute bottom-[9px] h-[5px] w-[11px] rounded-full bg-[#9a9db8]"></span></button>
            <button aria-label="QQ" class="flex w-[77px] items-center justify-center"><svg class="h-[41px] w-[34px]"><path d="M5 38q6-4 11 0v2H5zM29 38q-6-4-11 0v2h11z" fill="#f0a30a" /><path d="M17 0q13 0 13 16 5 10 4 15-1 3-4-1-2 9-13 9T4 30q-3 4-4 1-1-5 4-15Q4 0 17 0z" fill="#050505" /><ellipse cx="17" cy="29" rx="10" ry="10" fill="#fff" /><path d="M4 16q13 5 26 0l1 5q-7 3-16 2v6h-5v-7l-7-2z" fill="#e8141c" /><ellipse cx="13" cy="8" rx="2.500" ry="4" fill="#fff" /><ellipse cx="20" cy="8" rx="2.500" ry="4" fill="#fff" /><circle cx="14" cy="9" r="1" /><circle cx="20" cy="9" r="1" /><ellipse cx="17" cy="14" rx="7" ry="2" fill="#f7b500" /></svg></button>
            <button aria-label="记事本" class="relative flex w-[77px] items-center justify-center"><svg class="h-[42px] w-8"><path d="M0 2h32v34H0z" fill="#5ccbe6" /><path d="M0 35h32v4H0z" fill="#f2f2f2" /><path d="M0 38h32v4H0z" fill="#b35a12" /><path d="M5 0v5M12 0v5M19 0v5M26 0v5M5 12h21M5 19h21M5 26h21" stroke="#0b6a90" stroke-width="3" /></svg><span class="absolute bottom-[9px] h-[5px] w-[11px] rounded-full bg-[#9a9aa4]"></span></button>
            <button aria-label="Illustrator" class="relative flex w-[77px] items-center justify-center"><span class="flex size-[70px] items-center justify-center rounded-lg border border-[#3a3b44] bg-[#2b2c36]"><span class="flex h-[39px] w-10 items-center justify-center rounded-[7px] bg-[#330000] pb-1 text-2xl font-bold text-[#ff9a00]">Ai</span></span><span class="absolute bottom-[9px] h-[5px] w-7 rounded-full bg-[#4cc2ff]"></span></button>
        </div>
        <div class="flex items-center justify-end pr-[26px] text-white">
            <button aria-label="显示隐藏的图标"><svg class="h-[11px] w-[18px]" fill="none" stroke="currentColor" stroke-width="1.500"><path d="M1 10l8-8 8 8" /></svg></button>
            <button aria-label="中文输入" class="ml-[26px] text-[28px]">中</button>
            <svg class="ml-[38px] h-[27px] w-[29px]"><path d="M1 4L25 0l4 22-23 5-3-1z" fill="#fa5a1e" /><path d="M23 7q-12-3-14 2c0 5 12 3 11 8-2 4-9 3-13 2" fill="none" stroke="#fff" stroke-width="4" /></svg>
            <svg class="ml-[38px] h-[21px] w-[28px]" fill="none" stroke="currentColor" stroke-width="2"><path d="M1 8q13-13 26 0M5 12q9-8 18 0M9 16q5-4 10 0" /><circle cx="14" cy="19" r="2" fill="currentColor" stroke="none" /></svg>
            <svg class="ml-[14px] h-[22px] w-[28px]" fill="none" stroke="currentColor" stroke-width="1.800"><path d="M1 7h5l6-6v20l-6-6H1zM15 7q3 4 0 8M19 4q5 7 0 14" /><path d="M23 1q7 10 0 20" stroke="#555" /></svg>
            <svg class="ml-[14px] h-[22px] w-[28px]" fill="currentColor"><path d="M7 20h14q3 0 3-3V6q0-3-3-3H11" fill="none" stroke="currentColor" stroke-width="2" /><path d="M11 6h11v12H8v-6q3-2 3-6zM25 8h3v6h-3zM0 4h9v4q0 3-3 4v9H4v-9q-4-1-4-4zM1 0h2v4H1zM6 0h2v4H6z" /></svg>
            <div class="ml-[27px] text-right text-[19px] leading-7"><div>7:19</div><div>2021/12/25</div></div>
        </div>
    </footer>

    <!-- watermark -->
    <div class="pointer-events-none absolute bottom-[64px] right-[138px] flex w-[458px] flex-col text-white/75 [-webkit-text-stroke:2px_rgba(120,120,120,0.35)]">
        <div class="mb-[10px] flex h-[144px] items-end font-['Liberation_Sans','Noto_Sans_CJK_SC',sans-serif] font-bold">
            <span class="w-[156px] text-[100px] leading-[92px]">Bai</span>
            <span class="relative block h-[144px] w-[138px]">
                <svg class="size-full overflow-visible" viewBox="0 0 138 144" fill="#fff" fill-opacity=".75" stroke="#787878" stroke-opacity=".35" stroke-width="2"><ellipse cx="18" cy="55" rx="17" ry="26" /><ellipse cx="52" cy="23" rx="16" ry="26" /><ellipse cx="93" cy="25" rx="17" ry="26" transform="rotate(8 93 25)" /><ellipse cx="117" cy="68" rx="18" ry="26" /><path d="M67 59c20 0 28 24 46 42 18 20 14 42-8 43-14 1-24-4-38-4s-24 5-36 4C8 142 4 122 20 102 38 82 44 59 67 59z" /></svg>
                <span class="absolute left-[28px] top-[70px] bg-[linear-gradient(90deg,#fff_8px,#555_8px,#555_50px,#fff_50px)] bg-clip-text text-[60px] leading-[70px] text-transparent">du</span>
            </span>
            <span class="ml-[3px] text-[76px] leading-[76px] [-webkit-text-stroke:1px_rgba(120,120,120,0.35)]">经验</span>
        </div>
        <div class="whitespace-nowrap text-[54px] leading-[54px] [-webkit-text-stroke:1px_rgba(120,120,120,0.35)]">jingyan.baidu.com</div>
    </div>

</body>

</html>
